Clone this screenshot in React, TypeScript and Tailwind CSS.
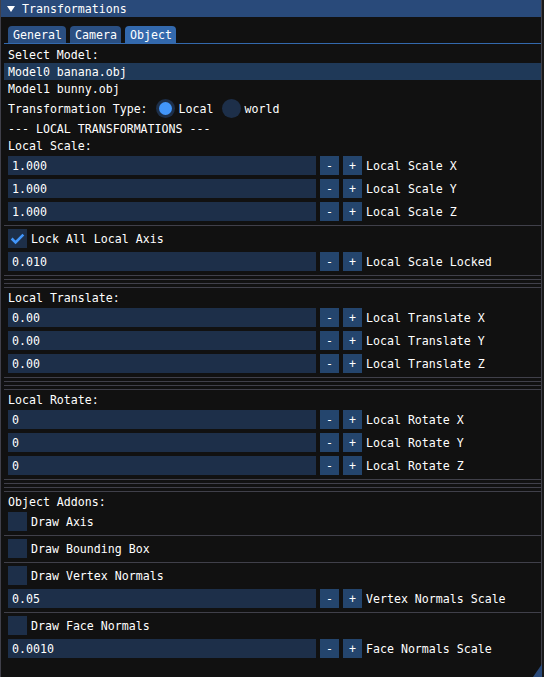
import React from 'react';

// text sits 1px lower in the cell than the default line box puts it
const Label = ({ children }: { children: React.ReactNode }) => (
  <div className="h-[13px] leading-[15px] whitespace-pre">{children}</div>
);

const Separator = () => <div className="h-px -mb-px -ml-[4px] bg-[#40404a]" />;

const InputRow = ({ value, label }: { value: string; label: string }) => (
  <div className="flex h-[19px] items-center">
    <div className="flex h-[19px] w-[308px] items-center bg-[#1d2f49] pl-[4px] whitespace-pre">
      <span className="relative top-px">{value}</span>
    </div>
    <div className="ml-[4px] flex h-[19px] w-[19px] items-center justify-center bg-[#24456d]">
      <span className="relative top-px">-</span>
    </div>
    <div className="ml-[4px] flex h-[19px] w-[19px] items-center justify-center bg-[#24456d]">
      <span className="relative top-px">+</span>
    </div>
    <div className="relative top-px ml-[4px] whitespace-pre">{label}</div>
  </div>
);

const Checkbox = ({ label, checked }: { label: string; checked?: boolean }) => (
  <div className="flex h-[19px] items-center">
    <div className="h-[19px] w-[19px] bg-[#1d2f49]">
      {checked && (
        <svg width="19" height="19" viewBox="0 0 19 19">
          <polyline
            points="3.65,9.5 7.55,13.4 15.35,5.6"
            fill="none"
            stroke="#4296fa"
            strokeWidth="2.6"
            strokeLinejoin="miter"
          />
        </svg>
      )}
    </div>
    <div className="relative top-px ml-[4px] whitespace-pre">{label}</div>
  </div>
);

const Radio = ({ label, active }: { label: string; active?: boolean }) => (
  <div className="flex items-center">
    <div className="flex h-[19px] w-[19px] items-center justify-center rounded-full bg-[#1d2f49]">
      {active && <div className="h-[13px] w-[13px] rounded-full bg-[#4296fa]" />}
    </div>
    <div className="relative top-px ml-[4px]">{label}</div>
  </div>
);

const tabs = [
  { name: 'General', w: 'w-[58px]', active: false },
  { name: 'Camera', w: 'w-[51px]', active: false },
  { name: 'Object', w: 'w-[51px]', active: true },
];

export default function App() {
  return (
    <div
      className="h-[677px] w-[544px] overflow-hidden bg-[#1a1a1a] text-[11.6px] leading-[13px] text-white"
      style={{ fontFamily: '"DejaVu Sans Mono", "Liberation Mono", monospace' }}
    >
      <div className="relative flex h-[681px] w-[542px] flex-col border-x border-[#40404a] bg-[#111111]">
        {/* title bar */}
        <div className="flex h-[17px] items-center bg-[#294a7a]">
          <svg className="ml-[6px]" width="8" height="6" viewBox="0 0 8 6">
            <polygon points="0,0 8,0 4,6" fill="#ffffff" />
          </svg>
          <span className="relative top-px ml-[7px]">Transformations</span>
        </div>

        <div className="flex flex-col gap-[4px] pl-[7px] pt-[9px]">
          {/* tab bar */}
          <div className="flex flex-col">
            <div className="flex h-[17px] gap-[4px]">
              {tabs.map((t) => (
                <div
                  key={t.name}
                  className={`${t.w} flex h-[17px] items-center rounded-t-[4px] pl-[5px] ${
                    t.active ? 'bg-[#3369ad]' : 'bg-[#2a4f82]'
                  }`}
                >
                  <span className="relative top-px">{t.name}</span>
                </div>
              ))}
            </div>
            <div className="-ml-[4px] h-px bg-[#3369ad]" />
          </div>

          <Label>Select Model:</Label>
          <div className="-my-[2px] -ml-[4px] bg-[#1f3958] py-[2px] pl-[4px]">
            <Label>Model0 banana.obj</Label>
          </div>
          <Label>Model1 bunny.obj</Label>
          <div className="flex h-[19px] items-center gap-[8px]">
            <span className="relative top-px">Transformation Type:</span>
            <Radio label="Local" active />
            <Radio label="world" />
          </div>
          <Label>--- LOCAL TRANSFORMATIONS ---</Label>
          <Label>Local Scale:</Label>
          <InputRow value="1.000" label="Local Scale X" />
          <InputRow value="1.000" label="Local Scale Y" />
          <InputRow value="1.000" label="Local Scale Z" />
          <Separator />
          <Checkbox label="Lock All Local Axis" checked />
          <InputRow value="0.010" label="Local Scale Locked" />
          <Separator />
          <Separator />
          <Separator />
          <Separator />
          <Label>Local Translate:</Label>
          <InputRow value="0.00" label="Local Translate X" />
          <InputRow value="0.00" label="Local Translate Y" />
          <InputRow value="0.00" label="Local Translate Z" />
          <Separator />
          <Separator />
          <Separator />
          <Separator />
          <Label>Local Rotate:</Label>
          <InputRow value="0" label="Local Rotate X" />
          <InputRow value="0" label="Local Rotate Y" />
          <InputRow value="0" label="Local Rotate Z" />
          <Separator />
          <Separator />
          <Separator />
          <Separator />
          <Label>Object Addons:</Label>
          <Checkbox label="Draw Axis" />
          <Separator />
          <Checkbox label="Draw Bounding Box" />
          <Separator />
          <Checkbox label="Draw Vertex Normals" />
          <InputRow value="0.05" label="Vertex Normals Scale" />
          <Separator />
          <Checkbox label="Draw Face Normals" />
          <InputRow value="0.0010" label="Face Normals Scale" />
        </div>

        {/* resize grip */}
        <svg className="absolute left-[532px] top-[664px]" width="9" height="13" viewBox="0 0 9 13">
          <polygon points="9,0 9,13 0,13" fill="#2a4a7a" />
        </svg>
      </div>
    </div>
  );
}
